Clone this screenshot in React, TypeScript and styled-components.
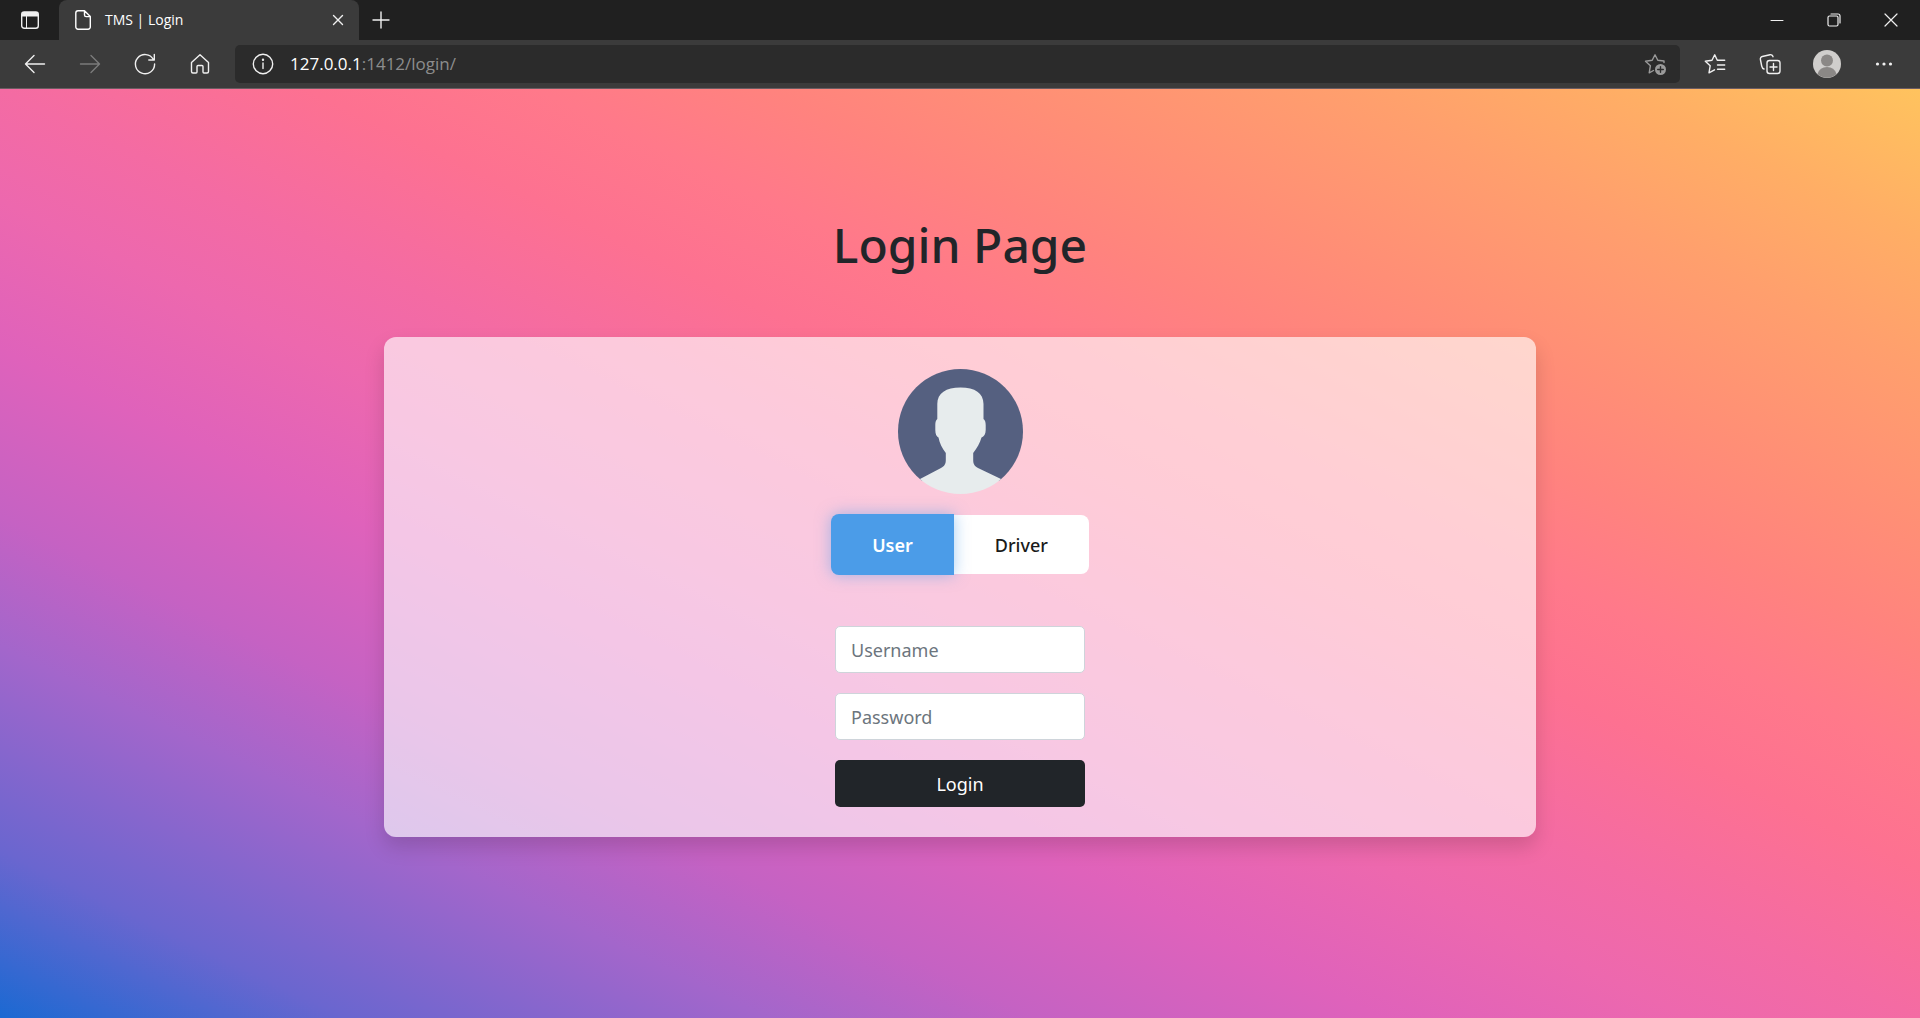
import React, { useState } from 'react';
import styled, { createGlobalStyle, css } from 'styled-components';

const GlobalStyle = createGlobalStyle`
  *, *::before, *::after { box-sizing: border-box; }
  body { margin: 0; font-family: "Noto Sans", "Open Sans", sans-serif; color: #212529; }
  button, input { font-family: inherit; margin: 0; }
  button { cursor: pointer; }
`;

const Browser = styled.div`
  min-height: 100vh;
  display: flex;
  flex-direction: column;
`;

const TabStrip = styled.header`
  display: flex;
  align-items: stretch;
  height: 40px;
  background: #202020;
`;

const IconButton = styled.button<{ $width?: number; $color?: string }>`
  display: flex;
  align-items: center;
  justify-content: center;
  flex: none;
  width: ${(p) => p.$width ?? 40}px;
  padding: 0;
  border: 0;
  background: transparent;
  color: ${(p) => p.$color ?? '#f0f0f0'};
`;

const Tab = styled.div`
  display: flex;
  align-items: center;
  width: 300px;
  padding: 0 1px 0 14px;
  gap: 12px;
  background: #3b3b3b;
  border-radius: 8px 8px 0 0;
  color: #fff;
`;

const TabTitle = styled.span`
  flex: 1;
  font-family: "Open Sans", "Noto Sans", sans-serif;
  font-size: 14px;
  line-height: 20px;
`;

const Spacer = styled.div`
  flex: 1;
`;

const Toolbar = styled.nav`
  display: flex;
  align-items: stretch;
  height: 49px;
  padding: 5px 7px;
  background: #3b3b3b;
  border-bottom: 1px solid #6b5c62;
`;

const NavButtons = styled.div`
  display: flex;
  width: 228px;
  padding-left: 8px;
  gap: 15px;
`;

const AddressBar = styled.div`
  display: flex;
  align-items: center;
  flex: 1;
  border-radius: 5px;
  background: #2b2b2b;
`;

const Url = styled.span`
  flex: 1;
  font-size: 17px;
  line-height: 24px;
  font-family: "Open Sans", "Noto Sans", sans-serif;
  color: #8d8d8d;
`;

const Host = styled.span`
  color: #fff;
`;

const Actions = styled.div`
  display: flex;
  width: 233px;
  padding-left: 15px;
  gap: 15px;
`;

const Page = styled.main`
  flex: 1;
  display: flex;
  flex-direction: column;
  align-items: center;
  padding: 124px 0 60px;
  background: linear-gradient(
    to right top,
    #1b69d2 0%,
    #6a66cf 9%,
    #a366cb 20%,
    #c562c3 27%,
    #df62bb 36%,
    #ed68ae 44%,
    #f46ba3 50%,
    #fd7191 58%,
    #ff798a 64%,
    #ff837e 70%,
    #ff8e76 76%,
    #ff9f6d 85%,
    #ffae65 92%,
    #ffc35e 100%
  );
`;

const Title = styled.h1`
  margin: 0 0 60px;
  font-size: 48px;
  line-height: 64px;
  font-weight: 500;
`;

const Card = styled.section`
  display: flex;
  flex-direction: column;
  align-items: center;
  width: 60%;
  padding: 32px 20px 30px;
  border-radius: 12px;
  background: rgba(255, 255, 255, 0.64);
  box-shadow: 0 10px 20px rgba(0, 0, 0, 0.15);
`;

const Roles = styled.div`
  display: flex;
  align-items: center;
  margin: 20px 0 51px;
`;

const RoleButton = styled.button<{ $active: boolean }>`
  height: 59px;
  padding: 0 41px;
  border: 0;
  border-radius: 0 8px 8px 0;
  background: #fff;
  color: #1a1a1a;
  font-size: 18px;
  font-weight: 500;
  line-height: 28px;

  &:first-child {
    border-radius: 8px 0 0 8px;
  }

  ${(p) =>
    p.$active &&
    css`
      height: 61px;
      z-index: 1;
      background: #4b9ce8;
      color: #fff;
      font-weight: 600;
      box-shadow: 0 0 15px rgba(75, 156, 232, 0.5);
    `}
`;

const Form = styled.form`
  display: flex;
  flex-direction: column;
  width: 250px;
  gap: 20px;
`;

const Field = styled.input`
  width: 100%;
  height: 47px;
  padding: 0 15px;
  border: 1px solid #ced4da;
  border-radius: 5px;
  background: #fff;
  color: #212529;
  font-size: 18px;
  &::placeholder { color: #6c757d; opacity: 1; }
`;

const Submit = styled.button`
  height: 47px;
  border: 0;
  border-radius: 5px;
  background: #212529;
  color: #fff;
  font-size: 18px;
`;

const Icon = ({ size = 24, children }: { size?: number; children: React.ReactNode }) => (
  <svg width={size} height={size} viewBox={`0 0 ${size} ${size}`} fill="none" stroke="currentColor"
    strokeWidth="1.4" strokeLinecap="round" strokeLinejoin="round" aria-hidden="true">
    {children}
  </svg>
);

const Avatar = () => (
  <svg width="125" height="125" viewBox="0 0 125 125" role="img" aria-label="Profile">
    <defs>
      <clipPath id="disc"><circle cx="62.5" cy="62.5" r="62.5" /></clipPath>
    </defs>
    <g clipPath="url(#disc)">
      <rect width="125" height="112" fill="#556080" />
      <path fill="#e7eced" d="M39.3 50 V35 C39.3 24 48 18.5 62.5 18.5 S85.5 24 85.5 35 V50 C87 51 87.7 53 87.7 56 V61 C87.7 65 86 67.5 83.5 68.5 C82 74 79 79 75.2 84 V91 C75.2 95 76.5 97 80 99 L103 110 L125 130 H0 L22 110 L43 99 C46.5 97 47.8 95 47.8 91 V84 C44 79 41.5 74 40.5 68.5 C38.5 67.5 37.3 65 37.3 61 V56 C37.3 53 38 51 39.3 50 Z" />
    </g>
  </svg>
);

const roles = ['User', 'Driver'];

export default function App() {
  const [role, setRole] = useState('User');
  return (
    <Browser>
      <GlobalStyle />
      <TabStrip>
        <IconButton $width={59} aria-label="Tab actions">
          <Icon size={20}>
            <rect x="1.7" y="2" width="16.6" height="16.3" rx="2.5" />
            <path d="M2 6.500V4a2 2 0 0 1 2-2h12a2 2 0 0 1 2 2v2.500z" fill="currentColor" stroke="none" />
            <path d="M6.5 6.5V18" strokeWidth="1" />
          </Icon>
        </IconButton>
        <Tab>
          <Icon size={20}>
            <path d="M5 .8H11.5L17.3 6.6V17a2.200 2.200 0 0 1-2.200 2.200H5a2.200 2.200 0 0 1-2.200-2.200V3A2.200 2.200 0 0 1 5 .8zM11.5 .8V5a1.600 1.600 0 0 0 1.600 1.600H17.3" />
          </Icon>
          <TabTitle>TMS | Login</TabTitle>
          <IconButton aria-label="Close tab">
            <Icon size={12}><path d="M1.5 1.5l9 9M10.5 1.5l-9 9" /></Icon>
          </IconButton>
        </Tab>
        <IconButton $width={44} aria-label="New tab">
          <Icon size={18}><path d="M9 1v16M1 9h16" /></Icon>
        </IconButton>
        <Spacer />
        <IconButton $width={57} aria-label="Minimize">
          <Icon size={14}><path d="M1 7.5h12" strokeWidth="1" /></Icon>
        </IconButton>
        <IconButton $width={57} aria-label="Restore">
          <Icon size={14}>
            <g strokeWidth="1.2">
              <rect x="1" y="3" width="10" height="10" rx="1.5" />
              <path d="M4 1h7a2 2 0 0 1 2 2v7" />
            </g>
          </Icon>
        </IconButton>
        <IconButton $width={58} aria-label="Close window">
          <Icon size={14}><path d="M1 1l12 12M13 1L1 13" strokeWidth="1.2" /></Icon>
        </IconButton>
      </TabStrip>
      <Toolbar>
        <NavButtons>
          <IconButton aria-label="Back">
            <Icon><path d="M21.500 12H2.500M11 3.500L2.500 12l8.500 8.500" /></Icon>
          </IconButton>
          <IconButton aria-label="Forward" $color="#7b7b7b">
            <Icon><path d="M2.500 12h19M13 3.500l8.500 8.500-8.500 8.500" /></Icon>
          </IconButton>
          <IconButton aria-label="Refresh">
            <Icon><path d="M20.400 7.500A9.600 9.600 0 1 0 21.600 12M21.300 2.500v5.500H15.800" /></Icon>
          </IconButton>
          <IconButton aria-label="Home">
            <Icon><path d="M3.500 10.600L12 2.800l8.500 7.800V19.500a1.500 1.500 0 0 1-1.500 1.500H16a1 1 0 0 1-1-1V14.500a1 1 0 0 0-1-1h-4a1 1 0 0 0-1 1V20a1 1 0 0 1-1 1H5a1.500 1.500 0 0 1-1.500-1.500z" /></Icon>
          </IconButton>
        </NavButtons>
        <AddressBar>
          <IconButton $width={55} aria-label="Site information">
            <Icon>
              <circle cx="12" cy="12" r="9.7" />
              <path d="M12 11v5.500" />
              <circle cx="12" cy="7.8" r=".5" fill="currentColor" />
            </Icon>
          </IconButton>
          <Url><Host>127.0.0.1</Host>:1412/login/</Url>
          <IconButton $width={50} aria-label="Add to favorites" $color="#9a9a9a">
            <Icon>
              <path d="M21 10.500V9L14.800 8.300 12 2.800 9.200 8.300 2.500 9.200 7.400 13.700 6.200 20.800 10.500 18.500" />
              <circle cx="17.5" cy="17.5" r="5.5" fill="currentColor" stroke="none" />
              <path d="M17.500 14.700v5.600M14.700 17.500h5.600" stroke="#2b2b2b" />
            </Icon>
          </IconButton>
        </AddressBar>
        <Actions>
          <IconButton aria-label="Favorites">
            <Icon>
              <path d="M15.500 8.300H14.300L11.700 2.800 9 8.300 2.300 9.200 7.200 13.700 6 20.800 11.500 17.800M15.500 8.300h6.200M14.500 13h7.200M14.500 17.300h7.200" />
            </Icon>
          </IconButton>
          <IconButton aria-label="Collections">
            <Icon>
              <rect x="9" y="8.5" width="13" height="13" rx="2.5" />
              <path d="M15.500 11.500v7M12 15h7M6 17C4.700 16.600 4 15.500 3.700 14L2.400 7.500A2.500 2.500 0 0 1 4.300 4.500L12 2.700a2.500 2.500 0 0 1 3 2" />
            </Icon>
          </IconButton>
          <IconButton $width={44} aria-label="Profile">
            <svg width="28" height="28" viewBox="0 0 28 28" aria-hidden="true">
              <circle cx="14" cy="14" r="14" fill="#d0cecc" />
              <circle cx="14" cy="10.5" r="6" fill="#8b8886" />
              <path d="M4.500 24a10 10 0 0 1 19 0A14 14 0 0 1 4.500 24z" fill="#8b8886" />
            </svg>
          </IconButton>
          <IconButton aria-label="Settings and more">
            <Icon size={18}>
              <g fill="currentColor" stroke="none">
                <circle cx="2.5" cy="9" r="1.6" /><circle cx="9" cy="9" r="1.6" /><circle cx="15.5" cy="9" r="1.6" />
              </g>
            </Icon>
          </IconButton>
        </Actions>
      </Toolbar>
      <Page>
        <Title>Login Page</Title>
        <Card>
          <Avatar />
          <Roles>
            {roles.map((r) => (
              <RoleButton key={r} type="button" $active={r === role} onClick={() => setRole(r)}>{r}</RoleButton>
            ))}
          </Roles>
          <Form onSubmit={(e) => e.preventDefault()}>
            <Field type="text" placeholder="Username" aria-label="Username" />
            <Field type="password" placeholder="Password" aria-label="Password" />
            <Submit type="submit">Login</Submit>
          </Form>
        </Card>
      </Page>
    </Browser>
  );
}
